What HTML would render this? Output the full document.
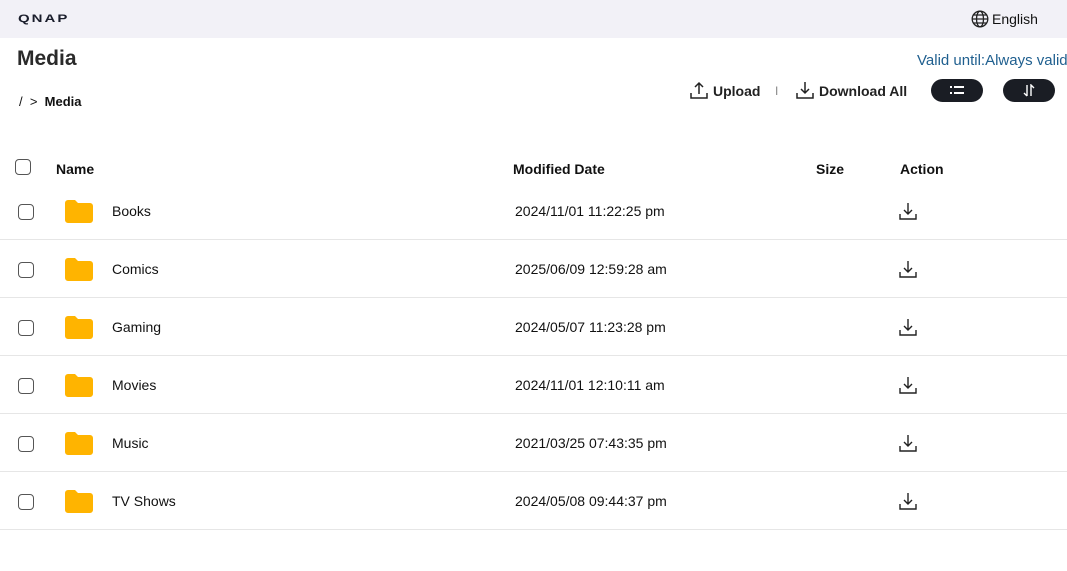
<!DOCTYPE html>
<html><head><meta charset="utf-8"><style>
*{margin:0;padding:0;box-sizing:border-box}
body{width:1067px;height:571px;background:#fff;font-family:"Liberation Sans",Arial,sans-serif;color:#111;position:relative;overflow:hidden}
.top{position:absolute;left:0;top:0;width:1067px;height:38px;background:#f2f1f7}
.abs{position:absolute;white-space:nowrap}
.cb{position:absolute;width:16px;height:16px;border:1.5px solid #555;border-radius:4px}
.row{position:absolute;left:0;width:1067px;height:58px;border-bottom:1px solid #e6e6e6}
.row span{position:absolute;top:21px;font-size:14px}
.btn{position:absolute;top:79px;width:52px;height:23px;background:#1a1d24;border-radius:12px}
</style></head><body>
<div class="top"></div>
<div class="abs" style="left:18px;top:10px;font-weight:bold;font-size:15px;letter-spacing:2px;color:#1a1d2b;transform:scaleY(0.75);transform-origin:left center">QNAP</div>
<svg class="abs" style="left:971px;top:10px" width="18" height="18" viewBox="0 0 18 18" fill="none" stroke="#222" stroke-width="1.3"><circle cx="9" cy="9" r="7.8"/><ellipse cx="9" cy="9" rx="3.5" ry="7.8"/><path d="M1.2 9h15.6M2.5 5h13M2.5 13h13"/></svg>
<div class="abs" style="left:992px;top:11px;font-size:14px">English</div>
<div class="abs" style="left:17px;top:47px;font-size:21px;font-weight:bold;color:#2a2a2a">Media</div>
<div class="abs" style="left:19px;top:94px;font-size:13px">/ &nbsp;&gt; &nbsp;<b>Media</b></div>
<div class="abs" style="left:917px;top:52px;font-size:15px;color:#1f5f8f">Valid until:Always valid</div>
<svg class="abs" style="left:690px;top:81px" width="18" height="18" viewBox="0 0 18 18" fill="none" stroke="#222" stroke-width="1.5"><path d="M9 13V2M5 6l4-4 4 4M1 12v5h16v-5"/></svg>
<div class="abs" style="left:713px;top:83px;font-size:14px;font-weight:bold;color:#222">Upload</div>
<div class="abs" style="left:775px;top:84px;font-size:12px;color:#888">I</div>
<svg class="abs" style="left:796px;top:81px" width="18" height="18" viewBox="0 0 18 18" fill="none" stroke="#222" stroke-width="1.5"><path d="M9 1v11M5 8l4 4 4-4M1 12v5h16v-5"/></svg>
<div class="abs" style="left:819px;top:83px;font-size:14px;font-weight:bold;color:#222">Download All</div>
<div class="btn" style="left:931px"><svg class="abs" style="left:19px;top:6px" width="14" height="11" viewBox="0 0 14 11" fill="#fff"><rect x="0" y="1" width="2" height="2"/><rect x="4" y="1" width="10" height="2"/><rect x="0" y="7" width="2" height="2"/><rect x="4" y="7" width="10" height="2"/></svg></div>
<div class="btn" style="left:1003px"><svg class="abs" style="left:19px;top:5px" width="14" height="13" viewBox="0 0 14 13" fill="none" stroke="#fff" stroke-width="1.4"><path d="M5 1v11M2 9l3 3M9 12V1l3 3"/></svg></div>
<div class="cb" style="left:15px;top:159px"></div>
<div class="abs" style="left:56px;top:161px;font-size:14px;font-weight:bold">Name</div>
<div class="abs" style="left:513px;top:161px;font-size:14px;font-weight:bold">Modified Date</div>
<div class="abs" style="left:816px;top:161px;font-size:14px;font-weight:bold">Size</div>
<div class="abs" style="left:900px;top:161px;font-size:14px;font-weight:bold">Action</div>
<div class="row" style="top:182px"><div class="cb" style="left:18px;top:22px"></div><svg class="abs" style="left:65px;top:18px" width="28" height="23"><path d="M0 3a3 3 0 0 1 3-3h7l3 3h12a3 3 0 0 1 3 3v14a3 3 0 0 1-3 3H3a3 3 0 0 1-3-3z" fill="#ffb400"/></svg><span style="left:112px">Books</span><span style="left:515px">2024/11/01 11:22:25 pm</span><svg class="abs" style="left:899px;top:20px" width="18" height="18" viewBox="0 0 18 18" fill="none" stroke="#222" stroke-width="1.4"><path d="M9 1v11M5 8l4 4 4-4M1 12v5h16v-5"/></svg></div>
<div class="row" style="top:240px"><div class="cb" style="left:18px;top:22px"></div><svg class="abs" style="left:65px;top:18px" width="28" height="23"><path d="M0 3a3 3 0 0 1 3-3h7l3 3h12a3 3 0 0 1 3 3v14a3 3 0 0 1-3 3H3a3 3 0 0 1-3-3z" fill="#ffb400"/></svg><span style="left:112px">Comics</span><span style="left:515px">2025/06/09 12:59:28 am</span><svg class="abs" style="left:899px;top:20px" width="18" height="18" viewBox="0 0 18 18" fill="none" stroke="#222" stroke-width="1.4"><path d="M9 1v11M5 8l4 4 4-4M1 12v5h16v-5"/></svg></div>
<div class="row" style="top:298px"><div class="cb" style="left:18px;top:22px"></div><svg class="abs" style="left:65px;top:18px" width="28" height="23"><path d="M0 3a3 3 0 0 1 3-3h7l3 3h12a3 3 0 0 1 3 3v14a3 3 0 0 1-3 3H3a3 3 0 0 1-3-3z" fill="#ffb400"/></svg><span style="left:112px">Gaming</span><span style="left:515px">2024/05/07 11:23:28 pm</span><svg class="abs" style="left:899px;top:20px" width="18" height="18" viewBox="0 0 18 18" fill="none" stroke="#222" stroke-width="1.4"><path d="M9 1v11M5 8l4 4 4-4M1 12v5h16v-5"/></svg></div>
<div class="row" style="top:356px"><div class="cb" style="left:18px;top:22px"></div><svg class="abs" style="left:65px;top:18px" width="28" height="23"><path d="M0 3a3 3 0 0 1 3-3h7l3 3h12a3 3 0 0 1 3 3v14a3 3 0 0 1-3 3H3a3 3 0 0 1-3-3z" fill="#ffb400"/></svg><span style="left:112px">Movies</span><span style="left:515px">2024/11/01 12:10:11 am</span><svg class="abs" style="left:899px;top:20px" width="18" height="18" viewBox="0 0 18 18" fill="none" stroke="#222" stroke-width="1.4"><path d="M9 1v11M5 8l4 4 4-4M1 12v5h16v-5"/></svg></div>
<div class="row" style="top:414px"><div class="cb" style="left:18px;top:22px"></div><svg class="abs" style="left:65px;top:18px" width="28" height="23"><path d="M0 3a3 3 0 0 1 3-3h7l3 3h12a3 3 0 0 1 3 3v14a3 3 0 0 1-3 3H3a3 3 0 0 1-3-3z" fill="#ffb400"/></svg><span style="left:112px">Music</span><span style="left:515px">2021/03/25 07:43:35 pm</span><svg class="abs" style="left:899px;top:20px" width="18" height="18" viewBox="0 0 18 18" fill="none" stroke="#222" stroke-width="1.4"><path d="M9 1v11M5 8l4 4 4-4M1 12v5h16v-5"/></svg></div>
<div class="row" style="top:472px"><div class="cb" style="left:18px;top:22px"></div><svg class="abs" style="left:65px;top:18px" width="28" height="23"><path d="M0 3a3 3 0 0 1 3-3h7l3 3h12a3 3 0 0 1 3 3v14a3 3 0 0 1-3 3H3a3 3 0 0 1-3-3z" fill="#ffb400"/></svg><span style="left:112px">TV Shows</span><span style="left:515px">2024/05/08 09:44:37 pm</span><svg class="abs" style="left:899px;top:20px" width="18" height="18" viewBox="0 0 18 18" fill="none" stroke="#222" stroke-width="1.4"><path d="M9 1v11M5 8l4 4 4-4M1 12v5h16v-5"/></svg></div>
</body></html>
